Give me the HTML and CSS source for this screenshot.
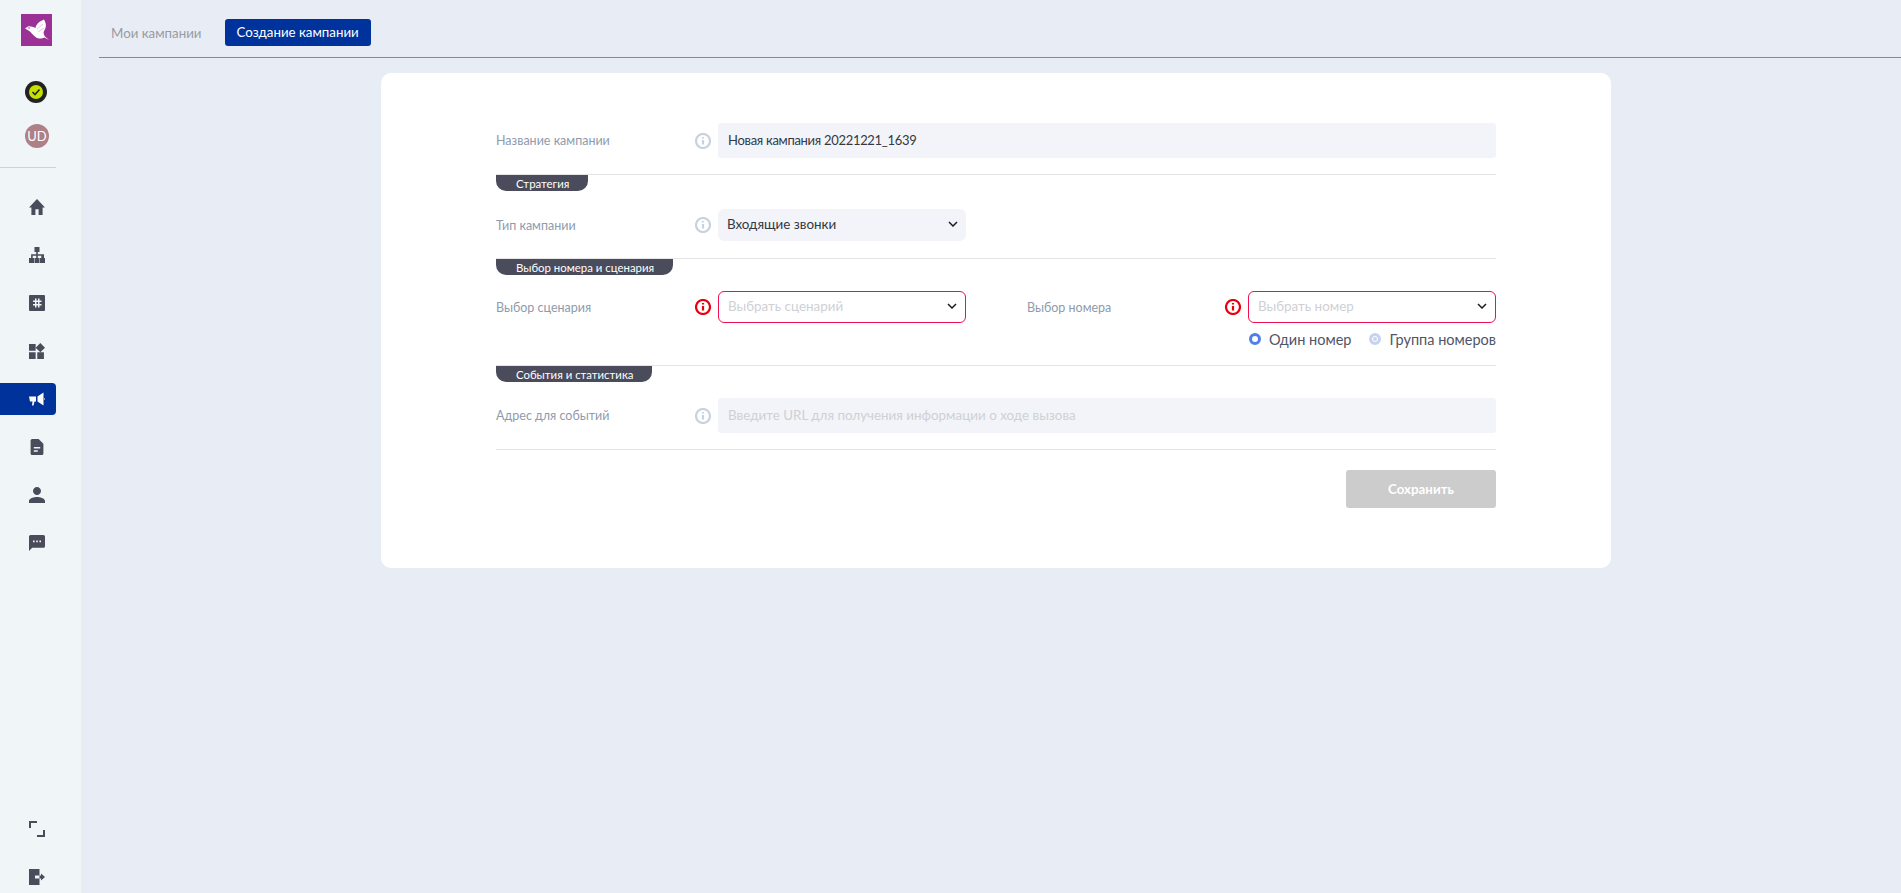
FILE: index.html
```html
<!DOCTYPE html>
<html lang="ru">
<head>
    <meta charset="UTF-8">
    <meta name="viewport" content="width=device-width, initial-scale=1.0">
    <title>Создание кампании</title>
    <link rel="stylesheet" href="styles.css">
</head>
<body>
    <div class="app">
        <aside class="sidebar">
            <svg class="logo" viewBox="0 0 31 32">
                <rect width="31" height="32" fill="#9b3096"/>
                <path d="M4 14.500l3-2c2-.5 5 .5 7.500 1.500.5-4 4.500-7 8.500-8.500 2 3.500 3 7.500 0 11.500-1 2 0 4 1 5.500l4 3.500-4.500-2.500c-2.500 1.500-6.500 1.500-9-.5-3-2-4.500-5.500-7-6.500z" fill="#fff"/>
                <path d="M16 15l6-5M17 18l6-4" fill="none" stroke="#d9a9d6" stroke-width="0.700"/>
                <circle cx="8" cy="14" r="0.800" fill="#9b3096"/>
            </svg>
            <svg class="status" viewBox="0 0 22 22">
                <circle cx="11" cy="11" r="11" fill="#222"/>
                <circle cx="11" cy="11" r="7" fill="#c6e000"/>
                <path d="M7.500 11l2.500 2.500 4.500-5" fill="none" stroke="#222" stroke-width="1.600"/>
            </svg>
            <div class="avatar">UD</div>
            <div class="sidebar-line"></div>

            <nav class="nav">
                <a class="nav-item"><svg class="icon" viewBox="2 3 20 17" preserveAspectRatio="none"><path d="M10 20v-6h4v6h5v-8h3L12 3 2 12h3v8z"/></svg></a>
                <a class="nav-item"><svg class="icon" viewBox="0 0 16 16"><path d="M5.500 0h5v5h-1.700v2.200H15V11h1v5h-5v-5h1.300V8.800H8.800V11H10.500v5h-5v-5h1.700V8.800H3.700V11H5v5H0v-5h2.100V7.200h5.100V5H5.500z"/></svg></a>
                <a class="nav-item"><svg class="icon" viewBox="0 0 16 16"><path fill-rule="evenodd" d="M1 0h14a1 1 0 0 1 1 1v14a1 1 0 0 1-1 1H1a1 1 0 0 1-1-1V1a1 1 0 0 1 1-1zm5 3.500v2H4v1.500h2v2H4v1.500h2v2h1.500v-2h1.500v2h1.500v-2h2V9h-2V7h2V5.500h-2v-2H9v2H7.500v-2zM7.500 7H9v2H7.500z"/></svg></a>
                <a class="nav-item"><svg class="icon" viewBox="3 1.700 19.300 19.300"><path d="M13 13v8h8v-8h-8zM3 21h8v-8H3v8zM3 3v8h8V3H3zm13.660-1.310L11 7.340 16.660 13l5.660-5.660-5.660-5.650z"/></svg></a>
                <a class="nav-item nav-item-active"><svg class="icon" viewBox="0 -1.500 16 16"><path d="M0 4h7v5H5.500l-1 4H3l.5-4H1zM8.500 4l6-4v13l-6-4zM15 5.500l1 1-1 1z"/></svg></a>
                <a class="nav-item"><svg class="icon" viewBox="3 2 18 20"><path fill-rule="evenodd" d="M14 2H6c-1.100 0-2 .9-2 2v16c0 1.100.9 2 2 2h12c1.100 0 2-.9 2-2V8l-6-6zm-6 16v-2h5v2zm0-4v-2h8v2z"/></svg></a>
                <a class="nav-item"><svg class="icon" viewBox="4 4 16 16"><path d="M12 12c2.210 0 4-1.790 4-4s-1.790-4-4-4-4 1.790-4 4 1.790 4 4 4zm0 2c-2.670 0-8 1.340-8 4v2h16v-2c0-2.660-5.330-4-8-4z"/></svg></a>
                <a class="nav-item"><svg class="icon" viewBox="2 2 20 20"><path d="M20 2H4c-1.100 0-1.990.9-1.990 2L2 22l4-4h14c1.100 0 2-.9 2-2V4c0-1.100-.9-2-2-2zM9 11H7V9h2v2zm4 0h-2V9h2v2zm4 0h-2V9h2v2z"/></svg></a>
            </nav>

            <div class="nav nav-bottom">
                <a class="nav-item"><svg class="icon" viewBox="0 0 16 16"><path d="M0 0h8v2H2v5H0zM14 9h2v7H8v-2h6z"/></svg></a>
                <a class="nav-item"><svg class="icon" viewBox="0 0 16 16"><path d="M0 0h10.500v6.500H6v3h4.500V16H0zM10.500 6.500h1.500V4.500L16 8l-4 3.500v-2h-1.500z"/></svg></a>
            </div>
        </aside>

        <main class="main">
            <div class="tabs">
                <a class="tab">Мои кампании</a>
                <a class="tab tab-active">Создание кампании</a>
            </div>

            <form class="card">
                <div class="form-row">
                    <label class="input-label">Название кампании</label>
                    <svg class="info" viewBox="0 0 16 16"><circle cx="8" cy="8" r="7"/><path d="M8 7v4.500M8 4v1.600"/></svg>
                    <input class="input-text input-filled" type="text" value="Новая кампания 20221221_1639">
                </div>

                <div class="section">
                    <span class="section-tag">Стратегия</span>
                    <div class="form-row form-row-small">
                        <label class="input-label">Тип кампании</label>
                        <svg class="info" viewBox="0 0 16 16"><circle cx="8" cy="8" r="7"/><path d="M8 7v4.500M8 4v1.600"/></svg>
                        <div class="select">
                            <span>Входящие звонки</span>
                            <svg class="chevron" viewBox="0 0 10 6"><path d="M1 1l4 4 4-4"/></svg>
                        </div>
                    </div>
                </div>

                <div class="section section-numbers">
                    <span class="section-tag">Выбор номера и сценария</span>
                    <div class="number-columns">
                        <div class="form-row">
                            <label class="input-label">Выбор сценария</label>
                            <svg class="info info-error" viewBox="0 0 16 16"><circle cx="8" cy="8" r="7"/><path d="M8 7v4.500M8 4v1.600"/></svg>
                            <div class="select select-error">
                                <span>Выбрать сценарий</span>
                                <svg class="chevron" viewBox="0 0 10 6"><path d="M1 1l4 4 4-4"/></svg>
                            </div>
                        </div>
                        <div class="number-col">
                            <div class="form-row">
                                <label class="input-label input-label-number">Выбор номера</label>
                                <svg class="info info-error" viewBox="0 0 16 16"><circle cx="8" cy="8" r="7"/><path d="M8 7v4.500M8 4v1.600"/></svg>
                                <div class="select select-error">
                                    <span>Выбрать номер</span>
                                    <svg class="chevron" viewBox="0 0 10 6"><path d="M1 1l4 4 4-4"/></svg>
                                </div>
                            </div>
                            <div class="radios">
                                <span class="radio radio-on">Один номер</span>
                                <span class="radio">Группа номеров</span>
                            </div>
                        </div>
                    </div>
                </div>

                <div class="section">
                    <span class="section-tag">События и статистика</span>
                    <div class="form-row">
                        <label class="input-label">Адрес для событий</label>
                        <svg class="info" viewBox="0 0 16 16"><circle cx="8" cy="8" r="7"/><path d="M8 7v4.500M8 4v1.600"/></svg>
                        <input class="input-text" type="text" placeholder="Введите URL для получения информации о ходе вызова">
                    </div>
                </div>

                <div class="form-footer">
                    <button type="button" class="form-button" disabled>Сохранить</button>
                </div>
            </form>
        </main>
    </div>
</body>
</html>
```

FILE: styles.css
```css
:root {
    --color-dark: #4a4c5c;
    --color-blue: #00329c;
    --color-field: #f2f4f9;
    --color-line: #e4e4e6;
    --color-label: #8e9bad;
    --color-error: #f0104f;
}

body {
    font-family: Lato, "Noto Sans", sans-serif;
    background-color: #e8edf5;
    margin: 0;
    padding: 0;
}

.app {
    display: flex;
    height: 893px;
    overflow: hidden;
}

/* Sidebar */
.sidebar {
    width: 81px;
    flex-shrink: 0;
    background-color: #f0f5f8;
    display: flex;
    flex-direction: column;
}

.logo {
    width: 31px;
    height: 32px;
    margin: 14px 0 0 21px;
}

.status {
    width: 22px;
    height: 22px;
    margin: 35px 0 0 25px;
}

.avatar {
    width: 24px;
    height: 24px;
    margin: 21px 0 0 25px;
    border-radius: 50%;
    background-color: #ae8087;
    color: #fff;
    font-size: 13px;
    line-height: 24px;
    text-align: center;
}

.sidebar-line {
    width: 56px;
    height: 1px;
    margin-top: 19px;
    background-color: #cfd2d6;
}

.nav {
    display: flex;
    flex-direction: column;
    gap: 16px;
    width: 56px;
    margin-top: 23px;
}

.nav-bottom {
    margin-top: auto;
}

.nav-item {
    height: 32px;
    display: flex;
    align-items: center;
    justify-content: flex-end;
    padding-right: 11px;
    border-radius: 0 4px 4px 0;
}

.nav-item-active {
    background-color: var(--color-blue);
}

.nav-item-active .icon {
    fill: #fff;
}

.icon {
    width: 16px;
    height: 16px;
    fill: var(--color-dark);
}

/* Tabs */
.main {
    flex: 1;
    min-width: 0;
}

.tabs {
    display: flex;
    align-items: center;
    gap: 23px;
    margin: 19px 0 0 18px;
    padding: 0 0 11px 12px;
    height: 27px;
    border-bottom: 1px solid #8a8a8a;
}

.tab {
    font-size: 13.300px;
    color: #979ba3;
}

.tab-active {
    background-color: var(--color-blue);
    color: #fff;
    border-radius: 3px;
    height: 27px;
    line-height: 27px;
    padding: 0 12px;
}

/* Form */
.card {
    width: 1000px;
    margin: 15px 0 0 300px;
    padding: 50px 115px 60px;
    background-color: #fff;
    border-radius: 10px;
}

.form-row {
    display: flex;
    align-items: center;
}

.input-label {
    width: 199px;
    flex-shrink: 0;
    font-size: 12.500px;
    color: var(--color-label);
}

.input-label-number {
    width: 198px;
}

.info {
    width: 16px;
    height: 16px;
    flex-shrink: 0;
    margin-right: 7px;
    fill: none;
    stroke: #c8d2df;
    stroke-width: 2.200;
}

.info-error {
    stroke: #e8000f;
}

.input-text {
    flex: 1;
    height: 35px;
    padding: 0 10px 2px;
    border: none;
    border-radius: 3px;
    background-color: var(--color-field);
    box-sizing: border-box;
    font-family: inherit;
    font-size: 13.400px;
    color: #333842;
}

.input-filled {
    font-size: 13px;
    letter-spacing: -0.300px;
}

.input-text::placeholder {
    color: #cfd0d4;
}

.select {
    width: 248px;
    height: 32px;
    padding: 0 8px 2px 9px;
    box-sizing: border-box;
    display: flex;
    align-items: center;
    justify-content: space-between;
    border-radius: 6px;
    background-color: var(--color-field);
    font-size: 13.400px;
    color: #333842;
}

.select-error {
    border: 1px solid var(--color-error);
    background-color: #fff;
    color: #cfd0d4;
}

.chevron {
    width: 10px;
    height: 6px;
    fill: none;
    stroke: #1c1c24;
    stroke-width: 1.500;
}

.section {
    margin-top: 16px;
    border-top: 1px solid var(--color-line);
}

.section-numbers {
    margin-top: 17px;
}

.section-tag {
    display: block;
    width: fit-content;
    height: 16px;
    margin-bottom: 16px;
    padding: 0 19px 0 20px;
    border-radius: 0 0 10px 10px;
    background-color: var(--color-dark);
    color: #fff;
    font-size: 11.400px;
    line-height: 18px;
    overflow: hidden;
}

.form-row-small {
    margin-top: 18px;
}

.number-columns {
    display: flex;
    gap: 61px;
    align-items: flex-start;
}

.number-col {
    display: flex;
    flex-direction: column;
    flex: 1;
}

.radios {
    display: flex;
    justify-content: flex-end;
    gap: 18px;
    height: 26px;
    padding-top: 7px;
    box-sizing: border-box;
}

.radio {
    display: flex;
    align-items: center;
    gap: 8px;
    height: 18px;
    font-size: 14.500px;
    color: #4f5568;
}

.radio::before {
    content: "";
    width: 6px;
    height: 6px;
    border: 3px solid #c5d3f0;
    border-radius: 50%;
    background-color: #c5d3f0;
    box-shadow: inset 0 0 0 1px #fff;
}

.radio-on::before {
    border-color: #4f7fe8;
    background-color: #fff;
    box-shadow: none;
}

.form-footer {
    display: flex;
    justify-content: flex-end;
    margin-top: 16px;
    padding-top: 20px;
    border-top: 1px solid var(--color-line);
}

.form-button {
    width: 150px;
    height: 38px;
    border: none;
    border-radius: 3px;
    background-color: #cccccc;
    color: #fff;
    font-family: inherit;
    font-size: 13.300px;
    font-weight: 700;
}
```
